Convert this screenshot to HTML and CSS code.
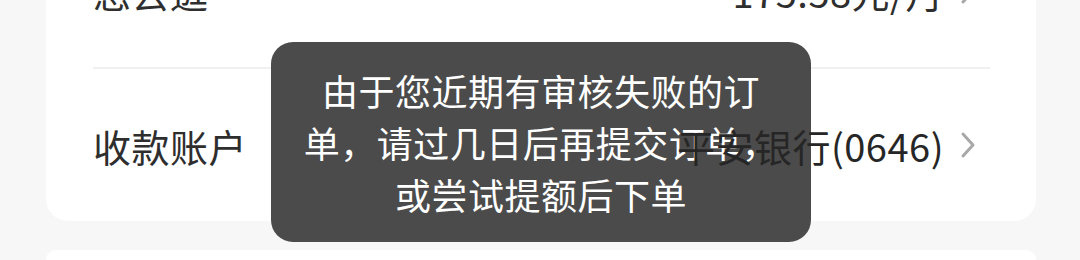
FILE: index.html
```html
<!DOCTYPE html>
<html lang="zh-CN">
<head>
<meta charset="utf-8">
<link rel="stylesheet" href="styles.css">
</head>
<body>
<div class="page">
  <div class="card">
    <div class="row row-first">
      <span class="label">您去逛</span>
      <span class="value">175.58元/月
        <svg class="chev" viewBox="0 0 20 30" width="20" height="30"><path d="M5 4 L15 15 L5 26" fill="none" stroke="#a8a8a8" stroke-width="3" stroke-linecap="round" stroke-linejoin="round"/></svg>
      </span>
    </div>
    <div class="row">
      <span class="label">收款账户</span>
      <span class="value value-top">平安银行(0646)
        <svg class="chev" viewBox="0 0 20 30" width="20" height="30"><path d="M5 4 L15 15 L5 26" fill="none" stroke="#a8a8a8" stroke-width="3" stroke-linecap="round" stroke-linejoin="round"/></svg>
      </span>
    </div>
  </div>
  <div class="card card-next"></div>
</div>
<div class="toast">由于您近期有审核失败的订单，请过几日后再提交订单，或尝试提额后下单</div>
</body>
</html>
```
FILE: styles.css
```css
html, body {
  margin: 0;
  padding: 0;
}
body {
  width: 1080px;
  height: 260px;
  overflow: hidden;
  background: #f7f7f7;
  font-family: "Noto Sans CJK SC", "Noto Sans", sans-serif;
  position: relative;
}
.page {
  padding: 0 44px 0 46px;
}
.card {
  background: #ffffff;
  border-radius: 22px;
  margin-top: -85px;
  padding: 0 46px 0 47px;
}
.card-next {
  margin-top: 29px;
  height: 10px;
  border-radius: 22px 22px 0 0;
}
.row {
  height: 152px;
  display: flex;
  align-items: center;
  justify-content: space-between;
  color: #2e2e2e;
  font-size: 38px;
  letter-spacing: 0.5px;
}
.row-first {
  border-bottom: 2px solid #f0f0f0;
}
.value {
  display: flex;
  align-items: center;
  gap: 14px;
}
.value-top {
  position: relative;
  z-index: 2;
  color: #262626;
}
.chev {
  margin-right: 12px;
}
.toast {
  position: absolute;
  z-index: 1;
  left: 271px;
  top: 42px;
  width: 490px;
  height: 156px;
  padding: 22px 25px;
  background: #4b4b4b;
  border-radius: 22px;
  color: #ffffff;
  font-size: 36px;
  line-height: 52px;
  letter-spacing: 0.5px;
  text-align: center;
}
```
